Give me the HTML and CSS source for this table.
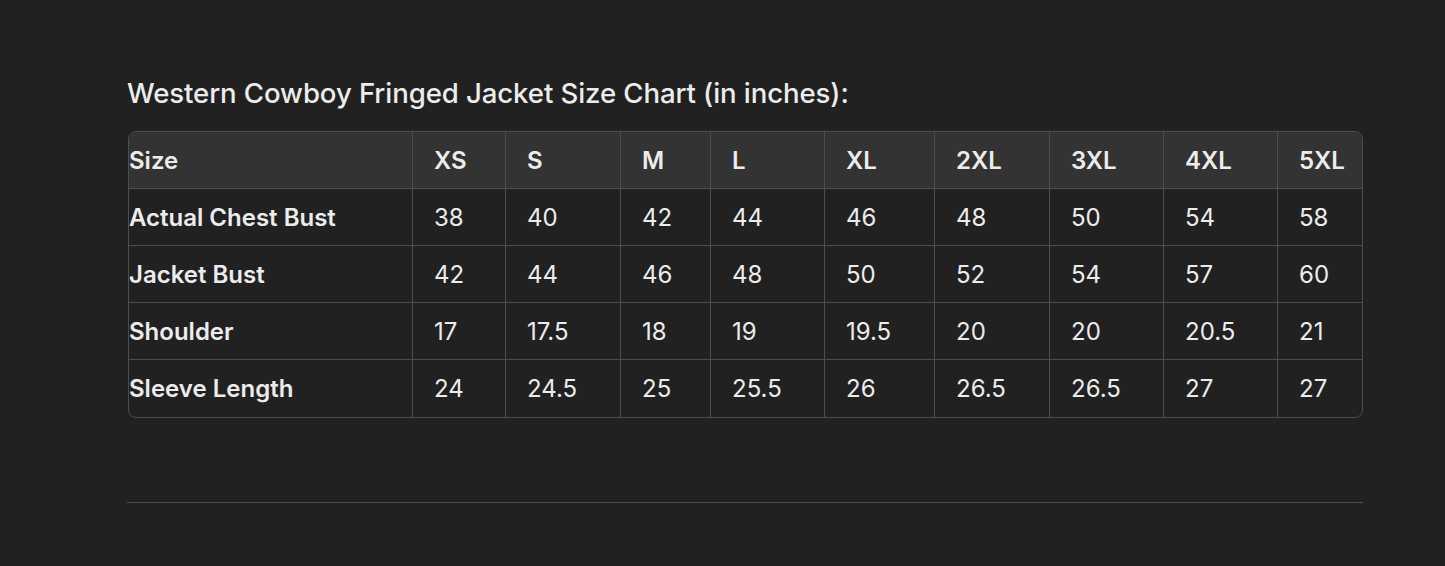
FILE: index.html
```html
<!DOCTYPE html>
<html lang="en">
<head>
<meta charset="utf-8">
<title>Western Cowboy Fringed Jacket Size Chart</title>
<link rel="stylesheet" href="styles.css">
</head>
<body>
<main class="content">
  <h3 class="title">Western Cowboy Fringed Jacket Size Chart (in inches):</h3>
  <div class="table-wrap">
    <table class="chart">
      <colgroup>
        <col class="c-label">
        <col class="c-xs">
        <col class="c-s">
        <col class="c-m">
        <col class="c-l">
        <col class="c-xl">
        <col class="c-2xl">
        <col class="c-3xl">
        <col class="c-4xl">
        <col class="c-5xl">
      </colgroup>
      <thead>
        <tr>
          <th>Size</th><th>XS</th><th>S</th><th>M</th><th>L</th><th>XL</th><th>2XL</th><th>3XL</th><th>4XL</th><th>5XL</th>
        </tr>
      </thead>
      <tbody>
        <tr>
          <td class="label">Actual Chest Bust</td><td>38</td><td>40</td><td>42</td><td>44</td><td>46</td><td>48</td><td>50</td><td>54</td><td>58</td>
        </tr>
        <tr>
          <td class="label">Jacket Bust</td><td>42</td><td>44</td><td>46</td><td>48</td><td>50</td><td>52</td><td>54</td><td>57</td><td>60</td>
        </tr>
        <tr>
          <td class="label">Shoulder</td><td>17</td><td>17.5</td><td>18</td><td>19</td><td>19.5</td><td>20</td><td>20</td><td>20.5</td><td>21</td>
        </tr>
        <tr class="last">
          <td class="label">Sleeve Length</td><td>24</td><td>24.5</td><td>25</td><td>25.5</td><td>26</td><td>26.5</td><td>26.5</td><td>27</td><td>27</td>
        </tr>
      </tbody>
    </table>
  </div>
  <hr class="rule">
</main>
</body>
</html>
```
FILE: styles.css
```css
html, body {
  margin: 0;
  padding: 0;
  background: #212121;
}
body {
  font-family: Inter, "Noto Sans", "Liberation Sans", sans-serif;
  color: #ececec;
  width: 1445px;
  height: 566px;
  overflow: hidden;
}
.content {
  padding: 75px 0 0 128px;
  width: 1235px;
}
.title {
  margin: 0 0 20px -1px;
  font-size: 27.6px;
  line-height: 36px;
  font-weight: 500;
  color: #ececec;
  letter-spacing: -0.1px;
}
.table-wrap {
  border: 1px solid #4d4d4d;
  border-radius: 8px;
  overflow: hidden;
}
.chart {
  width: 1233px;
  table-layout: fixed;
  border-collapse: separate;
  border-spacing: 0;
  font-size: 24px;
}
.c-label { width: 283px; }
.c-xs { width: 93px; }
.c-s { width: 115px; }
.c-m { width: 90px; }
.c-l { width: 114px; }
.c-xl { width: 110px; }
.c-2xl { width: 115px; }
.c-3xl { width: 114px; }
.c-4xl { width: 114px; }
.c-5xl { width: 85px; }
.chart th,
.chart td {
  box-sizing: border-box;
  height: 56px;
  padding: 0 0 0 21px;
  text-align: left;
  vertical-align: middle;
  border-left: 1px solid #4d4d4d;
  white-space: nowrap;
}
.chart th:first-child,
.chart td:first-child {
  border-left: none;
  padding-left: 0;
}
.chart tbody td {
  height: 57px;
  border-top: 1px solid #4d4d4d;
  font-weight: 400;
}
.chart tbody tr.last td {
  height: 58px;
}
.chart thead th {
  background: #333333;
  font-weight: 600;
}
.chart td.label {
  font-weight: 600;
}
.rule {
  margin: 84px 0 0 -1px;
  width: 1236px;
  border: none;
  border-top: 1px solid #4d4d4d;
  height: 0;
}
```
